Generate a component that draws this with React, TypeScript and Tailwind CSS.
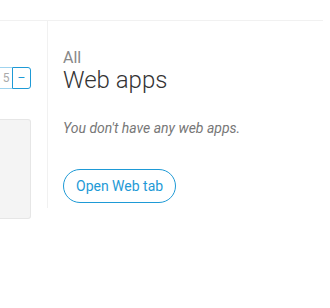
import React from "react";

function Pager(): React.ReactElement {
	return (
		<div className="flex justify-end h-[22px]">
			<span className="flex items-center justify-center w-[12px] h-[22px] border-y border-[#9fd3ee] text-[12px] text-[#aaaaaa]">
				5
			</span>
			<button className="flex items-center justify-center w-[19px] h-[22px] border border-[#1e9ad6] rounded-r-[3px] text-[12px] text-[#1e9ad6]">
				–
			</button>
		</div>
	);
}

export default function App(): React.ReactElement {
	return (
		<div className="w-[323px] bg-white font-['Roboto',sans-serif]">
			<div className="h-[21px] border-b border-[#f1f1f1]" />

			<div className="flex items-start">
				<aside className="w-[47px] shrink-0 pr-[16px]">
					<div className="mt-[46px]">
						<Pager />
					</div>
					<div className="mt-[30px] h-[100px] bg-[#f4f4f4] border border-l-0 border-[#e6e6e6] rounded-r-[3px]" />
				</aside>

				<main className="flex-1 border-l border-[#f1f1f1] pl-[15px] pt-[28px] pb-[5px]">
					<p className="text-[16px] leading-[18px] text-[#888888]">All</p>
					<h1 className="mt-[-1px] text-[24px] leading-[28px] font-light text-[#333333]">
						Web apps
					</h1>
					<p className="mt-[24px] text-[14px] leading-[20px] italic text-[#777777]">
						You don't have any web apps.
					</p>
					<button className="mt-[31px] h-[34px] px-[12px] rounded-full border border-[#1e9ad6] text-[14px] text-[#1e9ad6]">
						Open Web tab
					</button>
				</main>
			</div>
		</div>
	);
}
